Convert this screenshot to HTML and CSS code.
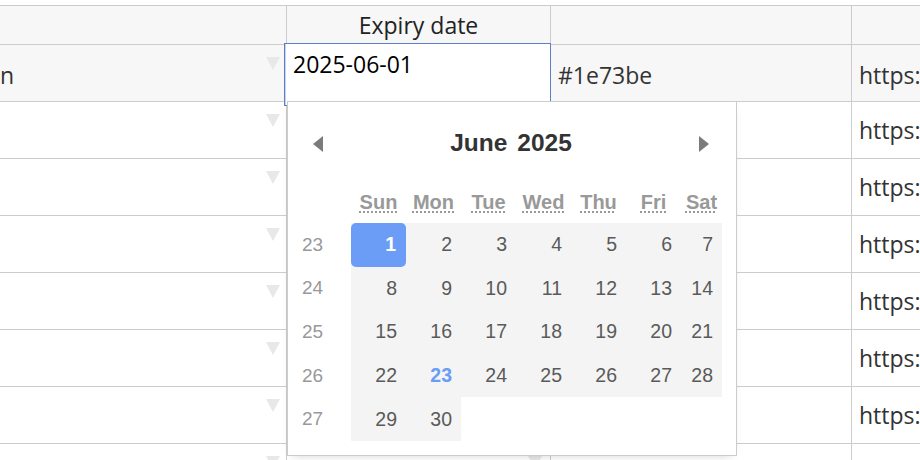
FILE: index.html
```html
<!DOCTYPE html>
<html lang="en">
<head>
<meta charset="utf-8">
<title>Expiry date picker</title>
<link rel="stylesheet" href="styles.css">
</head>
<body>
<div class="sheet">
  <div class="row head">
    <div class="cell c0"></div>
    <div class="cell c1 center">Expiry date</div>
    <div class="cell c2"></div>
    <div class="cell c3"></div>
  </div>
  <div class="row current">
    <div class="cell c0"><span class="txt">n</span><i class="drop"></i></div>
    <div class="cell c1"><i class="drop d1"></i></div>
    <div class="cell c2"><span class="txt">#1e73be</span></div>
    <div class="cell c3"><span class="txt">https:</span></div>
  </div>
  <div class="row">
    <div class="cell c0"><i class="drop"></i></div>
    <div class="cell c1"><i class="drop d1"></i></div>
    <div class="cell c2"></div>
    <div class="cell c3"><span class="txt">https:</span></div>
  </div>
  <div class="row">
    <div class="cell c0"><i class="drop"></i></div>
    <div class="cell c1"><i class="drop d1"></i></div>
    <div class="cell c2"></div>
    <div class="cell c3"><span class="txt">https:</span></div>
  </div>
  <div class="row">
    <div class="cell c0"><i class="drop"></i></div>
    <div class="cell c1"><i class="drop d1"></i></div>
    <div class="cell c2"></div>
    <div class="cell c3"><span class="txt">https:</span></div>
  </div>
  <div class="row">
    <div class="cell c0"><i class="drop"></i></div>
    <div class="cell c1"><i class="drop d1"></i></div>
    <div class="cell c2"></div>
    <div class="cell c3"><span class="txt">https:</span></div>
  </div>
  <div class="row">
    <div class="cell c0"><i class="drop"></i></div>
    <div class="cell c1"><i class="drop d1"></i></div>
    <div class="cell c2"></div>
    <div class="cell c3"><span class="txt">https:</span></div>
  </div>
  <div class="row">
    <div class="cell c0"><i class="drop"></i></div>
    <div class="cell c1"><i class="drop d1"></i></div>
    <div class="cell c2"></div>
    <div class="cell c3"><span class="txt">https:</span></div>
  </div>
  <div class="row last">
    <div class="cell c0"><i class="drop"></i></div>
    <div class="cell c1"><i class="drop d1"></i></div>
    <div class="cell c2"></div>
    <div class="cell c3"></div>
  </div>
</div>

<div class="editor">2025-06-01</div>

<div class="picker">
  <div class="title">
    <svg class="arrow prev" width="10" height="16" viewBox="0 0 10 16"><polygon points="10,0 10,16 0,8"/></svg>
    <div class="label"><span>June</span><span>2025</span></div>
    <svg class="arrow next" width="10" height="16" viewBox="0 0 10 16"><polygon points="0,0 0,16 10,8"/></svg>
  </div>
  <div class="cal">
    <div class="dow"></div>
    <div class="dow"><abbr title="Sunday">Sun</abbr></div>
    <div class="dow"><abbr title="Monday">Mon</abbr></div>
    <div class="dow"><abbr title="Tuesday">Tue</abbr></div>
    <div class="dow"><abbr title="Wednesday">Wed</abbr></div>
    <div class="dow"><abbr title="Thursday">Thu</abbr></div>
    <div class="dow"><abbr title="Friday">Fri</abbr></div>
    <div class="dow"><abbr title="Saturday">Sat</abbr></div>

    <div class="wk">23</div>
    <div class="day"><span class="btn sel">1</span></div>
    <div class="day"><span class="btn">2</span></div>
    <div class="day"><span class="btn">3</span></div>
    <div class="day"><span class="btn">4</span></div>
    <div class="day"><span class="btn">5</span></div>
    <div class="day"><span class="btn">6</span></div>
    <div class="day"><span class="btn">7</span></div>

    <div class="wk">24</div>
    <div class="day"><span class="btn">8</span></div>
    <div class="day"><span class="btn">9</span></div>
    <div class="day"><span class="btn">10</span></div>
    <div class="day"><span class="btn">11</span></div>
    <div class="day"><span class="btn">12</span></div>
    <div class="day"><span class="btn">13</span></div>
    <div class="day"><span class="btn">14</span></div>

    <div class="wk">25</div>
    <div class="day"><span class="btn">15</span></div>
    <div class="day"><span class="btn">16</span></div>
    <div class="day"><span class="btn">17</span></div>
    <div class="day"><span class="btn">18</span></div>
    <div class="day"><span class="btn">19</span></div>
    <div class="day"><span class="btn">20</span></div>
    <div class="day"><span class="btn">21</span></div>

    <div class="wk">26</div>
    <div class="day"><span class="btn">22</span></div>
    <div class="day"><span class="btn today">23</span></div>
    <div class="day"><span class="btn">24</span></div>
    <div class="day"><span class="btn">25</span></div>
    <div class="day"><span class="btn">26</span></div>
    <div class="day"><span class="btn">27</span></div>
    <div class="day"><span class="btn">28</span></div>

    <div class="wk">27</div>
    <div class="day"><span class="btn">29</span></div>
    <div class="day"><span class="btn">30</span></div>
    <div class="empty"></div>
    <div class="empty"></div>
    <div class="empty"></div>
    <div class="empty"></div>
    <div class="empty"></div>
  </div>
</div>
</body>
</html>
```

FILE: styles.css
```css
html, body {
  margin: 0;
  padding: 0;
  background: #fff;
}
body {
  width: 920px;
  height: 460px;
  overflow: hidden;
  position: relative;
  font-family: "Open Sans", "Noto Sans", sans-serif;
  font-size: 23px;
  color: #333;
}
.sheet {
  padding-top: 5px;
  width: 920px;
  height: 455px;
  overflow: hidden;
}
.row {
  display: grid;
  grid-template-columns: 287px 264px 301px 1fr;
  height: 57px;
  border-bottom: 1px solid #cccccc;
  box-sizing: border-box;
  background: #fff;
}
.row.head {
  height: 40px;
  border-top: 1px solid #cccccc;
  background: #f7f7f7;
  color: #222;
}
.row.current {
  background: #f7f7f7;
}
.row.last {
  height: 17px;
  border-bottom: none;
}
.cell {
  border-right: 1px solid #cccccc;
  display: flex;
  align-items: center;
  overflow: hidden;
  white-space: nowrap;
  min-width: 0;
}
.cell.center {
  justify-content: center;
}
.c2 { padding-left: 7px; }
.c3 { padding-left: 7px; border-right: none; }
.current .txt { margin-top: 3px; }
.drop {
  display: block;
  width: 0;
  height: 0;
  margin-left: auto;
  margin-right: 6px;
  align-self: flex-start;
  margin-top: 12px;
  flex-shrink: 0;
  border-left: 7.5px solid transparent;
  border-right: 7.5px solid transparent;
  border-top: 13px solid #e8e8e8;
}
.drop.d1 { margin-right: 8px; }

.editor {
  position: absolute;
  left: 284px;
  top: 43px;
  width: 267px;
  height: 63px;
  box-sizing: border-box;
  border: 1px solid #5b80c8;
  box-shadow: inset 1px 0 0 rgba(91,128,200,0.35);
  background: #fff;
  color: #000;
  padding: 4px 8px;
  line-height: normal;
}

.picker {
  position: absolute;
  left: 287px;
  top: 101px;
  width: 450px;
  height: 355px;
  box-sizing: border-box;
  border: 1px solid #cccccc;
  background: #fff;
  padding: 13px;
  font-family: "Liberation Sans", Arial, Helvetica, sans-serif;
  box-shadow: 0 4px 10px -6px rgba(0,0,0,0.25);
}
.title {
  display: flex;
  align-items: center;
  height: 56px;
  padding: 0 14px 0 12px;
}
.arrow {
  display: block;
  fill: #7b7b7b;
  margin-top: 2px;
}
.label {
  flex: 1;
  display: flex;
  justify-content: center;
  gap: 10px;
  font-size: 24.5px;
  font-weight: bold;
  color: #333;
}
.cal {
  display: grid;
  grid-template-columns: 50px repeat(6, 55px) 41px;
  grid-template-rows: 52px repeat(5, 43.6px);
}
.dow {
  display: flex;
  align-items: center;
  justify-content: center;
  padding-top: 10px;
  font-size: 20px;
  font-weight: bold;
  color: #999;
}
.dow abbr {
  text-decoration: underline dotted;
  text-decoration-thickness: 1.5px;
  text-underline-offset: 3px;
}
.wk {
  display: flex;
  align-items: center;
  padding-left: 1px;
  font-size: 19px;
  color: #999;
}
.day {
  background: #f4f4f4;
  display: flex;
}
.btn {
  flex: 1;
  display: flex;
  align-items: center;
  justify-content: flex-end;
  padding-right: 9px;
  font-size: 19.5px;
  color: #5a5a5a;
  border-radius: 5px;
}
.btn.sel {
  background: #6b9cf6;
  color: #fff;
  font-weight: bold;
  padding-right: 10px;
}
.btn.today {
  color: #6b9cf6;
  font-weight: bold;
}
.empty {
  background: #fff;
}
```
